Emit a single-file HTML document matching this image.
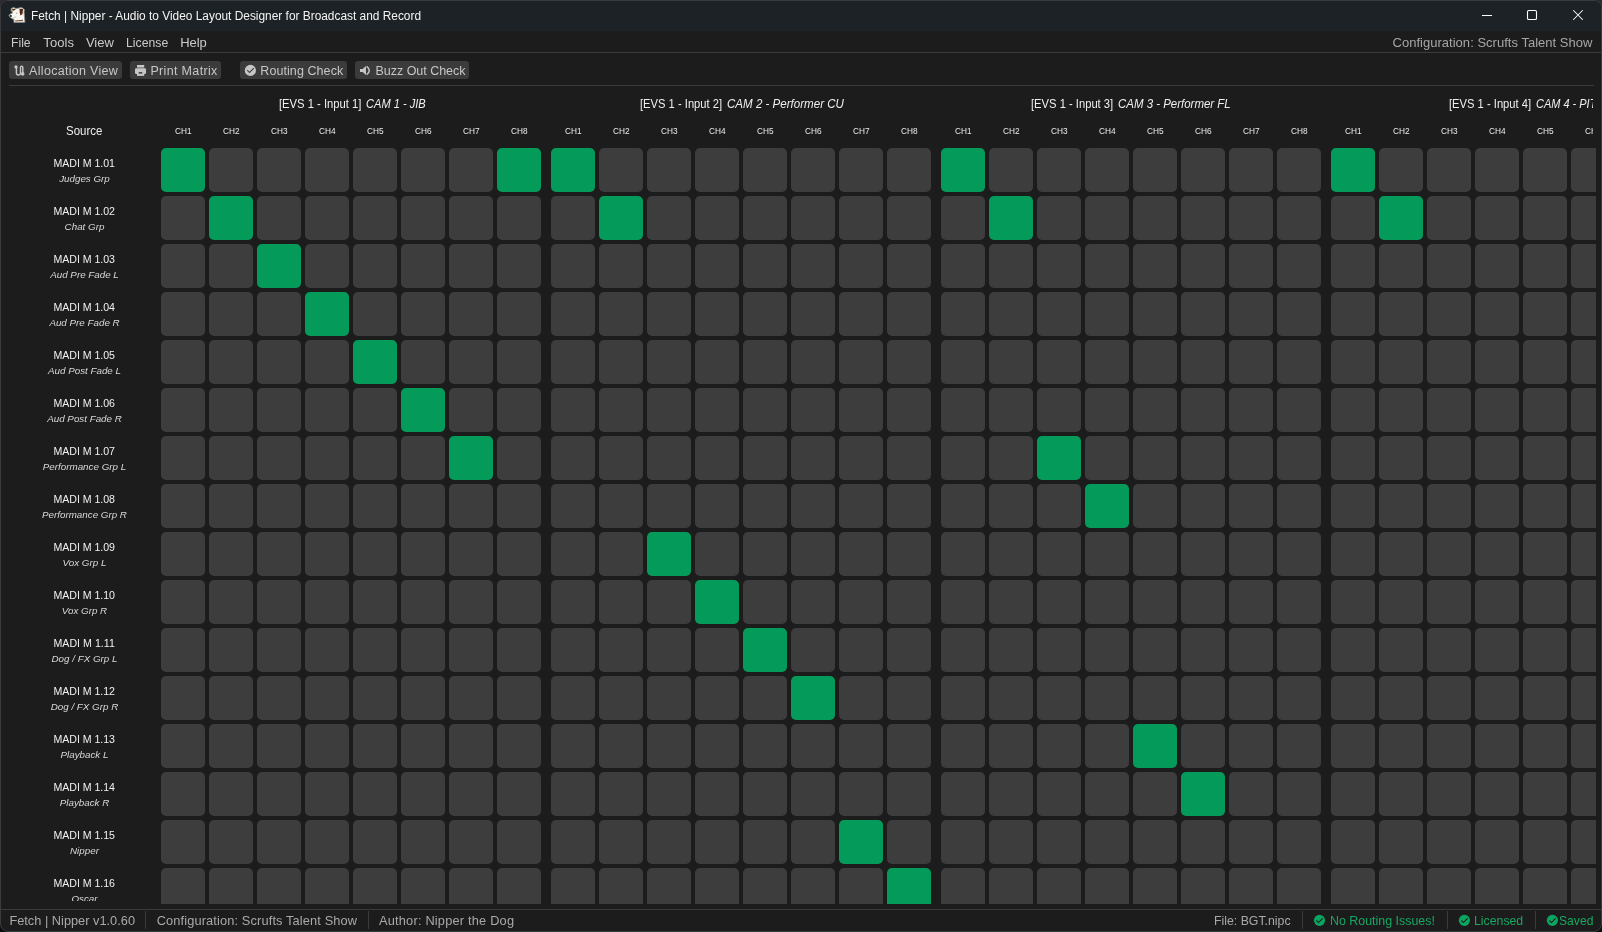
<!DOCTYPE html>
<html><head><meta charset="utf-8"><title>Fetch | Nipper</title>
<style>
html,body{margin:0;padding:0;width:1602px;height:932px;overflow:hidden;background:#0b0d12;}
body{position:relative;font-family:"Liberation Sans", sans-serif;}
#deskTop{position:absolute;left:0;top:0;width:1602px;height:12px;background:#2c2834;}
#win{position:absolute;left:0;top:0;width:1600px;height:930px;border:1px solid #3a3b3f;border-radius:8px;overflow:hidden;background:#1c1c1c;}
#tb{position:absolute;left:0;top:0;width:1600px;height:30px;background:#1c2225;}
.t{position:absolute;line-height:0;white-space:pre;}
.hd{font-size:12.2px;color:#efefef;}
.hd em{font-style:italic;}
.ch{font-size:9px;color:#eaeaea;letter-spacing:0px;}
.line{position:absolute;height:1px;background:#3b3b3b;}
.btn{position:absolute;top:60px;height:18px;background:#3b3b3b;border-radius:3px;}
#gridclip{position:absolute;left:160px;top:147px;width:1435px;height:756px;overflow:hidden;}
.c{position:absolute;width:44px;height:44px;background:#3d3d3d;border-radius:5px;}
.c.g{background:#049a5a;}
#hclip{position:absolute;left:0;top:90px;width:1592px;height:50px;overflow:hidden;}
.sep{position:absolute;top:910px;width:1px;height:18px;background:#3b3b3b;}
svg{position:absolute;display:block;}
</style></head><body>
<div id="deskTop"></div>
<div id="win">
 <div id="tb"></div>

 <div class="line" style="left:0;top:51px;width:1600px"></div>
 <div class="btn" style="left:8px;width:113px"></div>
 <div class="btn" style="left:129px;width:91px"></div>
 <div class="btn" style="left:239px;width:107px"></div>
 <div class="btn" style="left:354px;width:114px"></div>
 <div class="line" style="left:8px;top:84px;width:1585px"></div>

 <div id="gridclip"><i class="c g" style="left:0px;top:0px"></i><i class="c" style="left:48px;top:0px"></i><i class="c" style="left:96px;top:0px"></i><i class="c" style="left:144px;top:0px"></i><i class="c" style="left:192px;top:0px"></i><i class="c" style="left:240px;top:0px"></i><i class="c" style="left:288px;top:0px"></i><i class="c g" style="left:336px;top:0px"></i><i class="c g" style="left:390px;top:0px"></i><i class="c" style="left:438px;top:0px"></i><i class="c" style="left:486px;top:0px"></i><i class="c" style="left:534px;top:0px"></i><i class="c" style="left:582px;top:0px"></i><i class="c" style="left:630px;top:0px"></i><i class="c" style="left:678px;top:0px"></i><i class="c" style="left:726px;top:0px"></i><i class="c g" style="left:780px;top:0px"></i><i class="c" style="left:828px;top:0px"></i><i class="c" style="left:876px;top:0px"></i><i class="c" style="left:924px;top:0px"></i><i class="c" style="left:972px;top:0px"></i><i class="c" style="left:1020px;top:0px"></i><i class="c" style="left:1068px;top:0px"></i><i class="c" style="left:1116px;top:0px"></i><i class="c g" style="left:1170px;top:0px"></i><i class="c" style="left:1218px;top:0px"></i><i class="c" style="left:1266px;top:0px"></i><i class="c" style="left:1314px;top:0px"></i><i class="c" style="left:1362px;top:0px"></i><i class="c" style="left:1410px;top:0px"></i><i class="c" style="left:0px;top:48px"></i><i class="c g" style="left:48px;top:48px"></i><i class="c" style="left:96px;top:48px"></i><i class="c" style="left:144px;top:48px"></i><i class="c" style="left:192px;top:48px"></i><i class="c" style="left:240px;top:48px"></i><i class="c" style="left:288px;top:48px"></i><i class="c" style="left:336px;top:48px"></i><i class="c" style="left:390px;top:48px"></i><i class="c g" style="left:438px;top:48px"></i><i class="c" style="left:486px;top:48px"></i><i class="c" style="left:534px;top:48px"></i><i class="c" style="left:582px;top:48px"></i><i class="c" style="left:630px;top:48px"></i><i class="c" style="left:678px;top:48px"></i><i class="c" style="left:726px;top:48px"></i><i class="c" style="left:780px;top:48px"></i><i class="c g" style="left:828px;top:48px"></i><i class="c" style="left:876px;top:48px"></i><i class="c" style="left:924px;top:48px"></i><i class="c" style="left:972px;top:48px"></i><i class="c" style="left:1020px;top:48px"></i><i class="c" style="left:1068px;top:48px"></i><i class="c" style="left:1116px;top:48px"></i><i class="c" style="left:1170px;top:48px"></i><i class="c g" style="left:1218px;top:48px"></i><i class="c" style="left:1266px;top:48px"></i><i class="c" style="left:1314px;top:48px"></i><i class="c" style="left:1362px;top:48px"></i><i class="c" style="left:1410px;top:48px"></i><i class="c" style="left:0px;top:96px"></i><i class="c" style="left:48px;top:96px"></i><i class="c g" style="left:96px;top:96px"></i><i class="c" style="left:144px;top:96px"></i><i class="c" style="left:192px;top:96px"></i><i class="c" style="left:240px;top:96px"></i><i class="c" style="left:288px;top:96px"></i><i class="c" style="left:336px;top:96px"></i><i class="c" style="left:390px;top:96px"></i><i class="c" style="left:438px;top:96px"></i><i class="c" style="left:486px;top:96px"></i><i class="c" style="left:534px;top:96px"></i><i class="c" style="left:582px;top:96px"></i><i class="c" style="left:630px;top:96px"></i><i class="c" style="left:678px;top:96px"></i><i class="c" style="left:726px;top:96px"></i><i class="c" style="left:780px;top:96px"></i><i class="c" style="left:828px;top:96px"></i><i class="c" style="left:876px;top:96px"></i><i class="c" style="left:924px;top:96px"></i><i class="c" style="left:972px;top:96px"></i><i class="c" style="left:1020px;top:96px"></i><i class="c" style="left:1068px;top:96px"></i><i class="c" style="left:1116px;top:96px"></i><i class="c" style="left:1170px;top:96px"></i><i class="c" style="left:1218px;top:96px"></i><i class="c" style="left:1266px;top:96px"></i><i class="c" style="left:1314px;top:96px"></i><i class="c" style="left:1362px;top:96px"></i><i class="c" style="left:1410px;top:96px"></i><i class="c" style="left:0px;top:144px"></i><i class="c" style="left:48px;top:144px"></i><i class="c" style="left:96px;top:144px"></i><i class="c g" style="left:144px;top:144px"></i><i class="c" style="left:192px;top:144px"></i><i class="c" style="left:240px;top:144px"></i><i class="c" style="left:288px;top:144px"></i><i class="c" style="left:336px;top:144px"></i><i class="c" style="left:390px;top:144px"></i><i class="c" style="left:438px;top:144px"></i><i class="c" style="left:486px;top:144px"></i><i class="c" style="left:534px;top:144px"></i><i class="c" style="left:582px;top:144px"></i><i class="c" style="left:630px;top:144px"></i><i class="c" style="left:678px;top:144px"></i><i class="c" style="left:726px;top:144px"></i><i class="c" style="left:780px;top:144px"></i><i class="c" style="left:828px;top:144px"></i><i class="c" style="left:876px;top:144px"></i><i class="c" style="left:924px;top:144px"></i><i class="c" style="left:972px;top:144px"></i><i class="c" style="left:1020px;top:144px"></i><i class="c" style="left:1068px;top:144px"></i><i class="c" style="left:1116px;top:144px"></i><i class="c" style="left:1170px;top:144px"></i><i class="c" style="left:1218px;top:144px"></i><i class="c" style="left:1266px;top:144px"></i><i class="c" style="left:1314px;top:144px"></i><i class="c" style="left:1362px;top:144px"></i><i class="c" style="left:1410px;top:144px"></i><i class="c" style="left:0px;top:192px"></i><i class="c" style="left:48px;top:192px"></i><i class="c" style="left:96px;top:192px"></i><i class="c" style="left:144px;top:192px"></i><i class="c g" style="left:192px;top:192px"></i><i class="c" style="left:240px;top:192px"></i><i class="c" style="left:288px;top:192px"></i><i class="c" style="left:336px;top:192px"></i><i class="c" style="left:390px;top:192px"></i><i class="c" style="left:438px;top:192px"></i><i class="c" style="left:486px;top:192px"></i><i class="c" style="left:534px;top:192px"></i><i class="c" style="left:582px;top:192px"></i><i class="c" style="left:630px;top:192px"></i><i class="c" style="left:678px;top:192px"></i><i class="c" style="left:726px;top:192px"></i><i class="c" style="left:780px;top:192px"></i><i class="c" style="left:828px;top:192px"></i><i class="c" style="left:876px;top:192px"></i><i class="c" style="left:924px;top:192px"></i><i class="c" style="left:972px;top:192px"></i><i class="c" style="left:1020px;top:192px"></i><i class="c" style="left:1068px;top:192px"></i><i class="c" style="left:1116px;top:192px"></i><i class="c" style="left:1170px;top:192px"></i><i class="c" style="left:1218px;top:192px"></i><i class="c" style="left:1266px;top:192px"></i><i class="c" style="left:1314px;top:192px"></i><i class="c" style="left:1362px;top:192px"></i><i class="c" style="left:1410px;top:192px"></i><i class="c" style="left:0px;top:240px"></i><i class="c" style="left:48px;top:240px"></i><i class="c" style="left:96px;top:240px"></i><i class="c" style="left:144px;top:240px"></i><i class="c" style="left:192px;top:240px"></i><i class="c g" style="left:240px;top:240px"></i><i class="c" style="left:288px;top:240px"></i><i class="c" style="left:336px;top:240px"></i><i class="c" style="left:390px;top:240px"></i><i class="c" style="left:438px;top:240px"></i><i class="c" style="left:486px;top:240px"></i><i class="c" style="left:534px;top:240px"></i><i class="c" style="left:582px;top:240px"></i><i class="c" style="left:630px;top:240px"></i><i class="c" style="left:678px;top:240px"></i><i class="c" style="left:726px;top:240px"></i><i class="c" style="left:780px;top:240px"></i><i class="c" style="left:828px;top:240px"></i><i class="c" style="left:876px;top:240px"></i><i class="c" style="left:924px;top:240px"></i><i class="c" style="left:972px;top:240px"></i><i class="c" style="left:1020px;top:240px"></i><i class="c" style="left:1068px;top:240px"></i><i class="c" style="left:1116px;top:240px"></i><i class="c" style="left:1170px;top:240px"></i><i class="c" style="left:1218px;top:240px"></i><i class="c" style="left:1266px;top:240px"></i><i class="c" style="left:1314px;top:240px"></i><i class="c" style="left:1362px;top:240px"></i><i class="c" style="left:1410px;top:240px"></i><i class="c" style="left:0px;top:288px"></i><i class="c" style="left:48px;top:288px"></i><i class="c" style="left:96px;top:288px"></i><i class="c" style="left:144px;top:288px"></i><i class="c" style="left:192px;top:288px"></i><i class="c" style="left:240px;top:288px"></i><i class="c g" style="left:288px;top:288px"></i><i class="c" style="left:336px;top:288px"></i><i class="c" style="left:390px;top:288px"></i><i class="c" style="left:438px;top:288px"></i><i class="c" style="left:486px;top:288px"></i><i class="c" style="left:534px;top:288px"></i><i class="c" style="left:582px;top:288px"></i><i class="c" style="left:630px;top:288px"></i><i class="c" style="left:678px;top:288px"></i><i class="c" style="left:726px;top:288px"></i><i class="c" style="left:780px;top:288px"></i><i class="c" style="left:828px;top:288px"></i><i class="c g" style="left:876px;top:288px"></i><i class="c" style="left:924px;top:288px"></i><i class="c" style="left:972px;top:288px"></i><i class="c" style="left:1020px;top:288px"></i><i class="c" style="left:1068px;top:288px"></i><i class="c" style="left:1116px;top:288px"></i><i class="c" style="left:1170px;top:288px"></i><i class="c" style="left:1218px;top:288px"></i><i class="c" style="left:1266px;top:288px"></i><i class="c" style="left:1314px;top:288px"></i><i class="c" style="left:1362px;top:288px"></i><i class="c" style="left:1410px;top:288px"></i><i class="c" style="left:0px;top:336px"></i><i class="c" style="left:48px;top:336px"></i><i class="c" style="left:96px;top:336px"></i><i class="c" style="left:144px;top:336px"></i><i class="c" style="left:192px;top:336px"></i><i class="c" style="left:240px;top:336px"></i><i class="c" style="left:288px;top:336px"></i><i class="c" style="left:336px;top:336px"></i><i class="c" style="left:390px;top:336px"></i><i class="c" style="left:438px;top:336px"></i><i class="c" style="left:486px;top:336px"></i><i class="c" style="left:534px;top:336px"></i><i class="c" style="left:582px;top:336px"></i><i class="c" style="left:630px;top:336px"></i><i class="c" style="left:678px;top:336px"></i><i class="c" style="left:726px;top:336px"></i><i class="c" style="left:780px;top:336px"></i><i class="c" style="left:828px;top:336px"></i><i class="c" style="left:876px;top:336px"></i><i class="c g" style="left:924px;top:336px"></i><i class="c" style="left:972px;top:336px"></i><i class="c" style="left:1020px;top:336px"></i><i class="c" style="left:1068px;top:336px"></i><i class="c" style="left:1116px;top:336px"></i><i class="c" style="left:1170px;top:336px"></i><i class="c" style="left:1218px;top:336px"></i><i class="c" style="left:1266px;top:336px"></i><i class="c" style="left:1314px;top:336px"></i><i class="c" style="left:1362px;top:336px"></i><i class="c" style="left:1410px;top:336px"></i><i class="c" style="left:0px;top:384px"></i><i class="c" style="left:48px;top:384px"></i><i class="c" style="left:96px;top:384px"></i><i class="c" style="left:144px;top:384px"></i><i class="c" style="left:192px;top:384px"></i><i class="c" style="left:240px;top:384px"></i><i class="c" style="left:288px;top:384px"></i><i class="c" style="left:336px;top:384px"></i><i class="c" style="left:390px;top:384px"></i><i class="c" style="left:438px;top:384px"></i><i class="c g" style="left:486px;top:384px"></i><i class="c" style="left:534px;top:384px"></i><i class="c" style="left:582px;top:384px"></i><i class="c" style="left:630px;top:384px"></i><i class="c" style="left:678px;top:384px"></i><i class="c" style="left:726px;top:384px"></i><i class="c" style="left:780px;top:384px"></i><i class="c" style="left:828px;top:384px"></i><i class="c" style="left:876px;top:384px"></i><i class="c" style="left:924px;top:384px"></i><i class="c" style="left:972px;top:384px"></i><i class="c" style="left:1020px;top:384px"></i><i class="c" style="left:1068px;top:384px"></i><i class="c" style="left:1116px;top:384px"></i><i class="c" style="left:1170px;top:384px"></i><i class="c" style="left:1218px;top:384px"></i><i class="c" style="left:1266px;top:384px"></i><i class="c" style="left:1314px;top:384px"></i><i class="c" style="left:1362px;top:384px"></i><i class="c" style="left:1410px;top:384px"></i><i class="c" style="left:0px;top:432px"></i><i class="c" style="left:48px;top:432px"></i><i class="c" style="left:96px;top:432px"></i><i class="c" style="left:144px;top:432px"></i><i class="c" style="left:192px;top:432px"></i><i class="c" style="left:240px;top:432px"></i><i class="c" style="left:288px;top:432px"></i><i class="c" style="left:336px;top:432px"></i><i class="c" style="left:390px;top:432px"></i><i class="c" style="left:438px;top:432px"></i><i class="c" style="left:486px;top:432px"></i><i class="c g" style="left:534px;top:432px"></i><i class="c" style="left:582px;top:432px"></i><i class="c" style="left:630px;top:432px"></i><i class="c" style="left:678px;top:432px"></i><i class="c" style="left:726px;top:432px"></i><i class="c" style="left:780px;top:432px"></i><i class="c" style="left:828px;top:432px"></i><i class="c" style="left:876px;top:432px"></i><i class="c" style="left:924px;top:432px"></i><i class="c" style="left:972px;top:432px"></i><i class="c" style="left:1020px;top:432px"></i><i class="c" style="left:1068px;top:432px"></i><i class="c" style="left:1116px;top:432px"></i><i class="c" style="left:1170px;top:432px"></i><i class="c" style="left:1218px;top:432px"></i><i class="c" style="left:1266px;top:432px"></i><i class="c" style="left:1314px;top:432px"></i><i class="c" style="left:1362px;top:432px"></i><i class="c" style="left:1410px;top:432px"></i><i class="c" style="left:0px;top:480px"></i><i class="c" style="left:48px;top:480px"></i><i class="c" style="left:96px;top:480px"></i><i class="c" style="left:144px;top:480px"></i><i class="c" style="left:192px;top:480px"></i><i class="c" style="left:240px;top:480px"></i><i class="c" style="left:288px;top:480px"></i><i class="c" style="left:336px;top:480px"></i><i class="c" style="left:390px;top:480px"></i><i class="c" style="left:438px;top:480px"></i><i class="c" style="left:486px;top:480px"></i><i class="c" style="left:534px;top:480px"></i><i class="c g" style="left:582px;top:480px"></i><i class="c" style="left:630px;top:480px"></i><i class="c" style="left:678px;top:480px"></i><i class="c" style="left:726px;top:480px"></i><i class="c" style="left:780px;top:480px"></i><i class="c" style="left:828px;top:480px"></i><i class="c" style="left:876px;top:480px"></i><i class="c" style="left:924px;top:480px"></i><i class="c" style="left:972px;top:480px"></i><i class="c" style="left:1020px;top:480px"></i><i class="c" style="left:1068px;top:480px"></i><i class="c" style="left:1116px;top:480px"></i><i class="c" style="left:1170px;top:480px"></i><i class="c" style="left:1218px;top:480px"></i><i class="c" style="left:1266px;top:480px"></i><i class="c" style="left:1314px;top:480px"></i><i class="c" style="left:1362px;top:480px"></i><i class="c" style="left:1410px;top:480px"></i><i class="c" style="left:0px;top:528px"></i><i class="c" style="left:48px;top:528px"></i><i class="c" style="left:96px;top:528px"></i><i class="c" style="left:144px;top:528px"></i><i class="c" style="left:192px;top:528px"></i><i class="c" style="left:240px;top:528px"></i><i class="c" style="left:288px;top:528px"></i><i class="c" style="left:336px;top:528px"></i><i class="c" style="left:390px;top:528px"></i><i class="c" style="left:438px;top:528px"></i><i class="c" style="left:486px;top:528px"></i><i class="c" style="left:534px;top:528px"></i><i class="c" style="left:582px;top:528px"></i><i class="c g" style="left:630px;top:528px"></i><i class="c" style="left:678px;top:528px"></i><i class="c" style="left:726px;top:528px"></i><i class="c" style="left:780px;top:528px"></i><i class="c" style="left:828px;top:528px"></i><i class="c" style="left:876px;top:528px"></i><i class="c" style="left:924px;top:528px"></i><i class="c" style="left:972px;top:528px"></i><i class="c" style="left:1020px;top:528px"></i><i class="c" style="left:1068px;top:528px"></i><i class="c" style="left:1116px;top:528px"></i><i class="c" style="left:1170px;top:528px"></i><i class="c" style="left:1218px;top:528px"></i><i class="c" style="left:1266px;top:528px"></i><i class="c" style="left:1314px;top:528px"></i><i class="c" style="left:1362px;top:528px"></i><i class="c" style="left:1410px;top:528px"></i><i class="c" style="left:0px;top:576px"></i><i class="c" style="left:48px;top:576px"></i><i class="c" style="left:96px;top:576px"></i><i class="c" style="left:144px;top:576px"></i><i class="c" style="left:192px;top:576px"></i><i class="c" style="left:240px;top:576px"></i><i class="c" style="left:288px;top:576px"></i><i class="c" style="left:336px;top:576px"></i><i class="c" style="left:390px;top:576px"></i><i class="c" style="left:438px;top:576px"></i><i class="c" style="left:486px;top:576px"></i><i class="c" style="left:534px;top:576px"></i><i class="c" style="left:582px;top:576px"></i><i class="c" style="left:630px;top:576px"></i><i class="c" style="left:678px;top:576px"></i><i class="c" style="left:726px;top:576px"></i><i class="c" style="left:780px;top:576px"></i><i class="c" style="left:828px;top:576px"></i><i class="c" style="left:876px;top:576px"></i><i class="c" style="left:924px;top:576px"></i><i class="c g" style="left:972px;top:576px"></i><i class="c" style="left:1020px;top:576px"></i><i class="c" style="left:1068px;top:576px"></i><i class="c" style="left:1116px;top:576px"></i><i class="c" style="left:1170px;top:576px"></i><i class="c" style="left:1218px;top:576px"></i><i class="c" style="left:1266px;top:576px"></i><i class="c" style="left:1314px;top:576px"></i><i class="c" style="left:1362px;top:576px"></i><i class="c" style="left:1410px;top:576px"></i><i class="c" style="left:0px;top:624px"></i><i class="c" style="left:48px;top:624px"></i><i class="c" style="left:96px;top:624px"></i><i class="c" style="left:144px;top:624px"></i><i class="c" style="left:192px;top:624px"></i><i class="c" style="left:240px;top:624px"></i><i class="c" style="left:288px;top:624px"></i><i class="c" style="left:336px;top:624px"></i><i class="c" style="left:390px;top:624px"></i><i class="c" style="left:438px;top:624px"></i><i class="c" style="left:486px;top:624px"></i><i class="c" style="left:534px;top:624px"></i><i class="c" style="left:582px;top:624px"></i><i class="c" style="left:630px;top:624px"></i><i class="c" style="left:678px;top:624px"></i><i class="c" style="left:726px;top:624px"></i><i class="c" style="left:780px;top:624px"></i><i class="c" style="left:828px;top:624px"></i><i class="c" style="left:876px;top:624px"></i><i class="c" style="left:924px;top:624px"></i><i class="c" style="left:972px;top:624px"></i><i class="c g" style="left:1020px;top:624px"></i><i class="c" style="left:1068px;top:624px"></i><i class="c" style="left:1116px;top:624px"></i><i class="c" style="left:1170px;top:624px"></i><i class="c" style="left:1218px;top:624px"></i><i class="c" style="left:1266px;top:624px"></i><i class="c" style="left:1314px;top:624px"></i><i class="c" style="left:1362px;top:624px"></i><i class="c" style="left:1410px;top:624px"></i><i class="c" style="left:0px;top:672px"></i><i class="c" style="left:48px;top:672px"></i><i class="c" style="left:96px;top:672px"></i><i class="c" style="left:144px;top:672px"></i><i class="c" style="left:192px;top:672px"></i><i class="c" style="left:240px;top:672px"></i><i class="c" style="left:288px;top:672px"></i><i class="c" style="left:336px;top:672px"></i><i class="c" style="left:390px;top:672px"></i><i class="c" style="left:438px;top:672px"></i><i class="c" style="left:486px;top:672px"></i><i class="c" style="left:534px;top:672px"></i><i class="c" style="left:582px;top:672px"></i><i class="c" style="left:630px;top:672px"></i><i class="c g" style="left:678px;top:672px"></i><i class="c" style="left:726px;top:672px"></i><i class="c" style="left:780px;top:672px"></i><i class="c" style="left:828px;top:672px"></i><i class="c" style="left:876px;top:672px"></i><i class="c" style="left:924px;top:672px"></i><i class="c" style="left:972px;top:672px"></i><i class="c" style="left:1020px;top:672px"></i><i class="c" style="left:1068px;top:672px"></i><i class="c" style="left:1116px;top:672px"></i><i class="c" style="left:1170px;top:672px"></i><i class="c" style="left:1218px;top:672px"></i><i class="c" style="left:1266px;top:672px"></i><i class="c" style="left:1314px;top:672px"></i><i class="c" style="left:1362px;top:672px"></i><i class="c" style="left:1410px;top:672px"></i><i class="c" style="left:0px;top:720px"></i><i class="c" style="left:48px;top:720px"></i><i class="c" style="left:96px;top:720px"></i><i class="c" style="left:144px;top:720px"></i><i class="c" style="left:192px;top:720px"></i><i class="c" style="left:240px;top:720px"></i><i class="c" style="left:288px;top:720px"></i><i class="c" style="left:336px;top:720px"></i><i class="c" style="left:390px;top:720px"></i><i class="c" style="left:438px;top:720px"></i><i class="c" style="left:486px;top:720px"></i><i class="c" style="left:534px;top:720px"></i><i class="c" style="left:582px;top:720px"></i><i class="c" style="left:630px;top:720px"></i><i class="c" style="left:678px;top:720px"></i><i class="c g" style="left:726px;top:720px"></i><i class="c" style="left:780px;top:720px"></i><i class="c" style="left:828px;top:720px"></i><i class="c" style="left:876px;top:720px"></i><i class="c" style="left:924px;top:720px"></i><i class="c" style="left:972px;top:720px"></i><i class="c" style="left:1020px;top:720px"></i><i class="c" style="left:1068px;top:720px"></i><i class="c" style="left:1116px;top:720px"></i><i class="c" style="left:1170px;top:720px"></i><i class="c" style="left:1218px;top:720px"></i><i class="c" style="left:1266px;top:720px"></i><i class="c" style="left:1314px;top:720px"></i><i class="c" style="left:1362px;top:720px"></i><i class="c" style="left:1410px;top:720px"></i></div>

 <div class="line" style="left:0;top:908px;width:1600px"></div>
 <div class="sep" style="left:144px"></div>
 <div class="sep" style="left:367px"></div>
 <div class="sep" style="left:1301px"></div>
 <div class="sep" style="left:1446px"></div>
 <div class="sep" style="left:1534px"></div>
</div>
<svg id="icons" style="left:0;top:0" width="1602" height="932" viewBox="0 0 1602 932">
 <!-- dog -->
 <g id="dog">
  <path d="M11.2 8.6 L13.5 7.4 L15.9 8.5 L19.2 8.1 L20.4 7.4 L22.5 8.1 L24.6 9.9 L24 11.2 L24.9 21.9 L24.9 22.3 L14 22.6 L13.8 19.3 L11.9 18.6 L9.6 16.8 L9.1 15.3 L10 14.2 L11.9 13.4 L12.6 11.8 L11.2 11.1 Z" fill="#f7f5ee" stroke="#858b8e" stroke-width="0.9" stroke-linejoin="round"/>
  <path d="M12.1 8.8 L15.8 9 L15 10.1 L12.6 11 Z" fill="#5e2a0c"/>
  <path d="M19.5 8.8 L23 9 L22.5 13.9 L20.4 15.6 L19.7 12.3 Z" fill="#4f250d"/>
  <path d="M15.2 20.4 L23 19.7 L23 21 L15.2 21.6 Z" fill="#7d5236"/>
  <circle cx="10.8" cy="16" r="1" fill="#111"/>
  <circle cx="16.6" cy="13.2" r="0.65" fill="#9aa0a3"/>
  <path d="M12.6 18.1 L16.2 16.8" stroke="#b9bcbd" stroke-width="0.7"/>
 </g>
 <!-- window controls -->
 <rect x="1482" y="15" width="10" height="1" fill="#ffffff"/>
 <rect x="1527.5" y="10.5" width="9" height="9" rx="1.3" fill="none" stroke="#ffffff" stroke-width="1.1"/>
 <path d="M1573.5 10.5 L1582.5 19.5 M1582.5 10.5 L1573.5 19.5" stroke="#ffffff" stroke-width="1.05" stroke-linecap="round"/>
 <!-- toolbar icons -->
 <g fill="none" stroke="#c6c6c6" stroke-width="1.45">
  <path d="M16.4 67 V73 Q16.4 75 18.45 75 Q20.5 75 20.5 73 V67.6 Q20.5 66.1 21.65 66.1 Q22.8 66.1 22.8 67.6 V74"/>
 </g>
 <circle cx="16" cy="66.9" r="1.6" fill="#c6c6c6"/>
 <circle cx="22.7" cy="73.9" r="1.8" fill="#c6c6c6"/>
 <rect x="137" y="65" width="7.2" height="2.6" fill="#c6c6c6"/>
 <rect x="135" y="68.2" width="11" height="5.8" rx="1.2" fill="#c6c6c6"/>
 <rect x="137" y="71.5" width="7.2" height="4.4" fill="#c6c6c6"/>
 <rect x="138.7" y="72.1" width="3.6" height="1.5" fill="#3b3b3b"/>
 <circle cx="250.4" cy="70.4" r="5.6" fill="#c6c6c6"/>
 <path d="M247.3 70.2 L249.5 72.5 L253.9 68.2" stroke="#3b3b3b" stroke-width="1.05" fill="none"/>
 <path d="M360 69 H362.6 L366 66 V75 L362.6 72 H360 Z" fill="#c6c6c6"/>
 <path d="M366.6 66.4 Q372 70.5 366.6 74.6" stroke="#c6c6c6" stroke-width="1.5" fill="none"/>
 <!-- status checks -->
 <circle cx="1319.5" cy="920.35" r="5.6" fill="#0aa561"/>
 <path d="M1316.4 920.4 L1318.5 922.6 L1322.7 918.3" stroke="#1b1b1b" stroke-width="1.05" fill="none"/>
 <circle cx="1464.4" cy="920.35" r="5.6" fill="#0aa561"/>
 <path d="M1461.3 920.4 L1463.4 922.6 L1467.6 918.3" stroke="#1b1b1b" stroke-width="1.05" fill="none"/>
 <circle cx="1552.4" cy="920.35" r="5.6" fill="#0aa561"/>
 <path d="M1549.3 920.4 L1551.4 922.6 L1555.6 918.3" stroke="#1b1b1b" stroke-width="1.05" fill="none"/>
</svg>
<div style="position:absolute;left:0;top:0;width:1602px;height:932px;will-change:transform;">
<div class="t" style="left:31.00px;top:15.70px;font-size:12.3px;color:#f4f4f4;transform:scaleX(0.9665);transform-origin:0 0;">Fetch | Nipper - Audio to Video Layout Designer for Broadcast and Record</div>
<div class="t" style="left:11.30px;top:43.45px;font-size:13px;color:#cacaca;transform:scaleX(0.9354);transform-origin:0 0;">File</div>
<div class="t" style="left:43.30px;top:43.45px;font-size:13px;color:#cacaca;letter-spacing:0.108px;">Tools</div>
<div class="t" style="left:85.90px;top:43.45px;font-size:13px;color:#cacaca;letter-spacing:0.037px;">View</div>
<div class="t" style="left:126.10px;top:43.45px;font-size:13px;color:#cacaca;transform:scaleX(0.9417);transform-origin:0 0;">License</div>
<div class="t" style="left:180.20px;top:43.45px;font-size:13px;color:#cacaca;letter-spacing:-0.062px;">Help</div>
<div class="t" style="left:1392.50px;top:43.45px;font-size:13px;color:#a6a6a6;letter-spacing:0.023px;">Configuration: Scrufts Talent Show</div>
<div class="t" style="left:29.10px;top:71.12px;font-size:12.5px;color:#c6c6c6;letter-spacing:0.297px;">Allocation View</div>
<div class="t" style="left:150.40px;top:71.12px;font-size:12.5px;color:#c6c6c6;letter-spacing:0.341px;">Print Matrix</div>
<div class="t" style="left:260.30px;top:71.12px;font-size:12.5px;color:#c6c6c6;letter-spacing:0.077px;">Routing Check</div>
<div class="t" style="left:375.50px;top:71.12px;font-size:12.5px;color:#c6c6c6;letter-spacing:-0.023px;">Buzz Out Check</div>
<div class="t" style="left:65.85px;top:130.69px;font-size:12.3px;color:#eeeeee;transform:scaleX(0.9315);transform-origin:0 0;">Source</div>
<div class="t" style="left:9.40px;top:921.32px;font-size:12.8px;color:#a9a9a9;letter-spacing:-0.003px;">Fetch | Nipper v1.0.60</div>
<div class="t" style="left:156.70px;top:921.32px;font-size:12.8px;color:#a9a9a9;letter-spacing:0.130px;">Configuration: Scrufts Talent Show</div>
<div class="t" style="left:379.00px;top:921.32px;font-size:12.8px;color:#a9a9a9;letter-spacing:0.196px;">Author: Nipper the Dog</div>
<div class="t" style="left:1214.40px;top:921.32px;font-size:12.8px;color:#a9a9a9;transform:scaleX(0.9616);transform-origin:0 0;">File: BGT.nipc</div>
<div class="t" style="left:1329.80px;top:921.32px;font-size:12.8px;color:#17a863;transform:scaleX(0.9702);transform-origin:0 0;">No Routing Issues!</div>
<div class="t" style="left:1474.40px;top:921.32px;font-size:12.8px;color:#17a863;transform:scaleX(0.9603);transform-origin:0 0;">Licensed</div>
<div class="t" style="left:1558.60px;top:921.32px;font-size:12.8px;color:#17a863;transform:scaleX(0.9477);transform-origin:0 0;">Saved</div>
<div style="position:absolute;left:0;top:0;width:160px;height:901px;overflow:hidden"><div class="t" style="left:53.45px;top:162.99px;font-size:10.6px;color:#f0f0f0;letter-spacing:-0.030px;">MADI M 1.01</div>
<div class="t" style="left:59.17px;top:178.87px;font-size:9.8px;color:#d9d9d9;font-style:italic;">Judges Grp</div>
<div class="t" style="left:53.45px;top:210.99px;font-size:10.6px;color:#f0f0f0;letter-spacing:-0.030px;">MADI M 1.02</div>
<div class="t" style="left:64.62px;top:226.87px;font-size:9.8px;color:#d9d9d9;font-style:italic;">Chat Grp</div>
<div class="t" style="left:53.45px;top:258.99px;font-size:10.6px;color:#f0f0f0;letter-spacing:-0.030px;">MADI M 1.03</div>
<div class="t" style="left:50.19px;top:274.87px;font-size:9.8px;color:#d9d9d9;font-style:italic;">Aud Pre Fade L</div>
<div class="t" style="left:53.45px;top:306.99px;font-size:10.6px;color:#f0f0f0;letter-spacing:-0.030px;">MADI M 1.04</div>
<div class="t" style="left:49.38px;top:322.87px;font-size:9.8px;color:#d9d9d9;font-style:italic;">Aud Pre Fade R</div>
<div class="t" style="left:53.45px;top:354.99px;font-size:10.6px;color:#f0f0f0;letter-spacing:-0.030px;">MADI M 1.05</div>
<div class="t" style="left:48.01px;top:370.87px;font-size:9.8px;color:#d9d9d9;font-style:italic;">Aud Post Fade L</div>
<div class="t" style="left:53.45px;top:402.99px;font-size:10.6px;color:#f0f0f0;letter-spacing:-0.030px;">MADI M 1.06</div>
<div class="t" style="left:47.20px;top:418.87px;font-size:9.8px;color:#d9d9d9;font-style:italic;">Aud Post Fade R</div>
<div class="t" style="left:53.45px;top:450.99px;font-size:10.6px;color:#f0f0f0;letter-spacing:-0.030px;">MADI M 1.07</div>
<div class="t" style="left:42.84px;top:466.87px;font-size:9.8px;color:#d9d9d9;font-style:italic;">Performance Grp L</div>
<div class="t" style="left:53.45px;top:498.99px;font-size:10.6px;color:#f0f0f0;letter-spacing:-0.030px;">MADI M 1.08</div>
<div class="t" style="left:42.03px;top:514.87px;font-size:9.8px;color:#d9d9d9;font-style:italic;">Performance Grp R</div>
<div class="t" style="left:53.45px;top:546.99px;font-size:10.6px;color:#f0f0f0;letter-spacing:-0.030px;">MADI M 1.09</div>
<div class="t" style="left:62.62px;top:562.87px;font-size:9.8px;color:#d9d9d9;font-style:italic;">Vox Grp L</div>
<div class="t" style="left:53.45px;top:594.99px;font-size:10.6px;color:#f0f0f0;letter-spacing:-0.030px;">MADI M 1.10</div>
<div class="t" style="left:61.81px;top:610.87px;font-size:9.8px;color:#d9d9d9;font-style:italic;">Vox Grp R</div>
<div class="t" style="left:53.45px;top:642.99px;font-size:10.6px;color:#f0f0f0;letter-spacing:0.043px;">MADI M 1.11</div>
<div class="t" style="left:51.55px;top:658.87px;font-size:9.8px;color:#d9d9d9;font-style:italic;">Dog / FX Grp L</div>
<div class="t" style="left:53.45px;top:690.99px;font-size:10.6px;color:#f0f0f0;letter-spacing:-0.030px;">MADI M 1.12</div>
<div class="t" style="left:50.74px;top:706.87px;font-size:9.8px;color:#d9d9d9;font-style:italic;">Dog / FX Grp R</div>
<div class="t" style="left:53.45px;top:738.99px;font-size:10.6px;color:#f0f0f0;letter-spacing:-0.030px;">MADI M 1.13</div>
<div class="t" style="left:60.53px;top:754.87px;font-size:9.8px;color:#d9d9d9;font-style:italic;">Playback L</div>
<div class="t" style="left:53.45px;top:786.99px;font-size:10.6px;color:#f0f0f0;letter-spacing:-0.030px;">MADI M 1.14</div>
<div class="t" style="left:59.72px;top:802.87px;font-size:9.8px;color:#d9d9d9;font-style:italic;">Playback R</div>
<div class="t" style="left:53.45px;top:834.99px;font-size:10.6px;color:#f0f0f0;letter-spacing:-0.030px;">MADI M 1.15</div>
<div class="t" style="left:70.06px;top:850.87px;font-size:9.8px;color:#d9d9d9;font-style:italic;">Nipper</div>
<div class="t" style="left:53.45px;top:882.99px;font-size:10.6px;color:#f0f0f0;letter-spacing:-0.030px;">MADI M 1.16</div>
<div class="t" style="left:71.43px;top:898.87px;font-size:9.8px;color:#d9d9d9;font-style:italic;">Oscar</div></div>
<div id="hclip2" style="position:absolute;left:0;top:0;width:1593px;height:140px;overflow:hidden">
<div class="t hd" style="left:278.50px;top:103.73px;transform:scaleX(0.9224);transform-origin:0 0">[EVS 1 - Input 1]</div>
<div class="t hd" style="left:366.10px;top:103.73px;transform:scaleX(0.9088);transform-origin:0 0;font-style:italic">CAM 1 - JIB</div>
<div class="t ch" style="left:174.70px;top:130.85px;transform:scaleX(0.9214);transform-origin:0 0">CH1</div>
<div class="t ch" style="left:222.70px;top:130.85px;transform:scaleX(0.9214);transform-origin:0 0">CH2</div>
<div class="t ch" style="left:270.70px;top:130.85px;transform:scaleX(0.9214);transform-origin:0 0">CH3</div>
<div class="t ch" style="left:318.70px;top:130.85px;transform:scaleX(0.9214);transform-origin:0 0">CH4</div>
<div class="t ch" style="left:366.70px;top:130.85px;transform:scaleX(0.9214);transform-origin:0 0">CH5</div>
<div class="t ch" style="left:414.70px;top:130.85px;transform:scaleX(0.9214);transform-origin:0 0">CH6</div>
<div class="t ch" style="left:462.70px;top:130.85px;transform:scaleX(0.9214);transform-origin:0 0">CH7</div>
<div class="t ch" style="left:510.70px;top:130.85px;transform:scaleX(0.9214);transform-origin:0 0">CH8</div>
<div class="t hd" style="left:639.80px;top:103.73px;transform:scaleX(0.9180);transform-origin:0 0">[EVS 1 - Input 2]</div>
<div class="t hd" style="left:727.30px;top:103.73px;transform:scaleX(0.9485);transform-origin:0 0;font-style:italic">CAM 2 - Performer CU</div>
<div class="t ch" style="left:564.70px;top:130.85px;transform:scaleX(0.9214);transform-origin:0 0">CH1</div>
<div class="t ch" style="left:612.70px;top:130.85px;transform:scaleX(0.9214);transform-origin:0 0">CH2</div>
<div class="t ch" style="left:660.70px;top:130.85px;transform:scaleX(0.9214);transform-origin:0 0">CH3</div>
<div class="t ch" style="left:708.70px;top:130.85px;transform:scaleX(0.9214);transform-origin:0 0">CH4</div>
<div class="t ch" style="left:756.70px;top:130.85px;transform:scaleX(0.9214);transform-origin:0 0">CH5</div>
<div class="t ch" style="left:804.70px;top:130.85px;transform:scaleX(0.9214);transform-origin:0 0">CH6</div>
<div class="t ch" style="left:852.70px;top:130.85px;transform:scaleX(0.9214);transform-origin:0 0">CH7</div>
<div class="t ch" style="left:900.70px;top:130.85px;transform:scaleX(0.9214);transform-origin:0 0">CH8</div>
<div class="t hd" style="left:1030.80px;top:103.73px;transform:scaleX(0.9191);transform-origin:0 0">[EVS 1 - Input 3]</div>
<div class="t hd" style="left:1118.30px;top:103.73px;transform:scaleX(0.9401);transform-origin:0 0;font-style:italic">CAM 3 - Performer FL</div>
<div class="t ch" style="left:954.70px;top:130.85px;transform:scaleX(0.9214);transform-origin:0 0">CH1</div>
<div class="t ch" style="left:1002.70px;top:130.85px;transform:scaleX(0.9214);transform-origin:0 0">CH2</div>
<div class="t ch" style="left:1050.70px;top:130.85px;transform:scaleX(0.9214);transform-origin:0 0">CH3</div>
<div class="t ch" style="left:1098.70px;top:130.85px;transform:scaleX(0.9214);transform-origin:0 0">CH4</div>
<div class="t ch" style="left:1146.70px;top:130.85px;transform:scaleX(0.9214);transform-origin:0 0">CH5</div>
<div class="t ch" style="left:1194.70px;top:130.85px;transform:scaleX(0.9214);transform-origin:0 0">CH6</div>
<div class="t ch" style="left:1242.70px;top:130.85px;transform:scaleX(0.9214);transform-origin:0 0">CH7</div>
<div class="t ch" style="left:1290.70px;top:130.85px;transform:scaleX(0.9214);transform-origin:0 0">CH8</div>
<div class="t hd" style="left:1448.90px;top:103.73px;transform:scaleX(0.9180);transform-origin:0 0">[EVS 1 - Input 4]</div>
<div class="t hd" style="left:1536.00px;top:103.73px;transform:scaleX(0.9000);transform-origin:0 0;font-style:italic">CAM 4 - PIT Cam</div>
<div class="t ch" style="left:1344.70px;top:130.85px;transform:scaleX(0.9214);transform-origin:0 0">CH1</div>
<div class="t ch" style="left:1392.70px;top:130.85px;transform:scaleX(0.9214);transform-origin:0 0">CH2</div>
<div class="t ch" style="left:1440.70px;top:130.85px;transform:scaleX(0.9214);transform-origin:0 0">CH3</div>
<div class="t ch" style="left:1488.70px;top:130.85px;transform:scaleX(0.9214);transform-origin:0 0">CH4</div>
<div class="t ch" style="left:1536.70px;top:130.85px;transform:scaleX(0.9214);transform-origin:0 0">CH5</div>
<div class="t ch" style="left:1584.70px;top:130.85px;transform:scaleX(0.9214);transform-origin:0 0">CH6</div>
</div>
</div>
</body></html>
